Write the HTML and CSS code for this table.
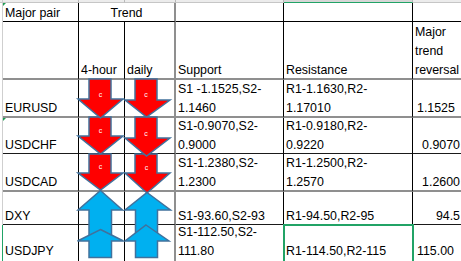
FILE: index.html
```html
<!DOCTYPE html>
<html>
<head>
<meta charset="utf-8">
<link rel="stylesheet" href="styles.css">
</head>
<body>
<div class="sheet">
  <div class="grid">
    <div class="row strip">
      <div class="c rh"></div><div class="c"></div><div class="c"></div><div class="c"></div><div class="c"></div><div class="c hsel"></div><div class="c"></div>
    </div>
    <div class="row r1">
      <div class="c rh"></div>
      <div class="c flag"><span>Major pair</span></div>
      <div class="c trend cc"><span>Trend</span></div>
      <div class="c"></div>
      <div class="c"></div>
      <div class="c"></div>
    </div>
    <div class="row r2">
      <div class="c rh"></div>
      <div class="c"></div>
      <div class="c"><span>4-hour</span></div>
      <div class="c cc"><span>daily</span></div>
      <div class="c"><span>Support</span></div>
      <div class="c"><span>Resistance</span></div>
      <div class="c"><span>Major</span><span>trend</span><span>reversal</span></div>
    </div>
    <div class="row r3">
      <div class="c rh"></div>
      <div class="c"><span>EURUSD</span></div>
      <div class="c"></div>
      <div class="c cc"></div>
      <div class="c"><span>S1 -1.1525,S2-</span><span>1.1460</span></div>
      <div class="c"><span>R1-1.1630,R2-</span><span>1.17010</span></div>
      <div class="c lpad"><span>1.1525</span></div>
    </div>
    <div class="row r4">
      <div class="c rh"></div>
      <div class="c flag"><span>USDCHF</span></div>
      <div class="c"></div>
      <div class="c cc"></div>
      <div class="c"><span>S1-0.9070,S2-</span><span>0.9000</span></div>
      <div class="c"><span>R1-0.9180,R2-</span><span>0.9220</span></div>
      <div class="c num"><span>0.9070</span></div>
    </div>
    <div class="row r5">
      <div class="c rh"></div>
      <div class="c"><span>USDCAD</span></div>
      <div class="c"></div>
      <div class="c cc"></div>
      <div class="c"><span>S1-1.2380,S2-</span><span>1.2300</span></div>
      <div class="c"><span>R1-1.2500,R2-</span><span>1.2570</span></div>
      <div class="c num"><span>1.2600</span></div>
    </div>
    <div class="row r6">
      <div class="c rh"></div>
      <div class="c"><span>DXY</span></div>
      <div class="c"></div>
      <div class="c cc"></div>
      <div class="c"><span>S1-93.60,S2-93</span></div>
      <div class="c"><span>R1-94.50,R2-95</span></div>
      <div class="c num"><span>94.5</span></div>
    </div>
    <div class="row r7">
      <div class="c rh rsel"></div>
      <div class="c"><span>USDJPY</span></div>
      <div class="c"></div>
      <div class="c cc"></div>
      <div class="c"><span>S1-112.50,S2-</span><span>111.80</span></div>
      <div class="c sel"><span>R1-114.50,R2-115</span></div>
      <div class="c lpad"><span>115.00</span></div>
    </div>
  </div>

  <svg class="shapes" width="461" height="261" viewBox="0 0 461 261">
    <g class="down">
      <path d="M89 154 H111 V173 H123 L100.5 190 L78 173 H89 Z"/>
      <path d="M89 117 H111 V136 H123 L100.5 154 L78 136 H89 Z"/>
      <path d="M89 79 H111 V99 H123 L100.5 118 L78 99 H89 Z"/>
      <path d="M135 154 H157 V173 H170 L147 193 L125 173 H135 Z"/>
      <path d="M135 117 H157 V138 H170 L146.5 156 L125 138 H135 Z"/>
      <path d="M135 79 H157 V100 H170 L146.5 117 L125 100 H135 Z"/>
    </g>
    <g class="up">
      <path d="M100.5 190.5 L122.5 210 H111.5 V240 H89 V210 H78 Z"/>
      <path d="M147 192.5 L170.5 210 H157.5 V240 H135.5 V210 H125 Z"/>
      <path d="M100.5 229.5 L123.5 241 H111.5 V257.5 H89 V241 H77.5 Z"/>
      <path d="M146 225 L169 241 H157.5 V257.5 H135.5 V241 H125 Z"/>
    </g>
    <g class="lbl">
      <text x="100.5" y="97">c</text>
      <text x="146" y="97">c</text>
      <text x="100.5" y="133">c</text>
      <text x="146" y="136">c</text>
      <text x="100.5" y="169">c</text>
      <text x="146.5" y="170">c</text>
    </g>
  </svg>
</div>
</body>
</html>
```

FILE: styles.css
```css
html, body {
  margin: 0;
  padding: 0;
  overflow: hidden;
  background: #ffffff;
}

body {
  font-family: "Liberation Sans", Arial, sans-serif;
  font-size: 12.4px;
  color: #000000;
}

.sheet {
  position: relative;
  width: 461px;
  height: 261px;
  overflow: hidden;
}

.grid {
  display: grid;
  grid-template-columns: 3px 76px 46px 51px 108px 129px 50px;
  grid-template-rows: 3px 19px 58px 38px 36px 38px 33px 37px;
  width: max-content;
}

.row {
  display: contents;
}

.c {
  box-sizing: border-box;
  border-right: 1px solid #000000;
  border-bottom: 1px solid #000000;
  padding: 0 2px;
  display: flex;
  flex-direction: column;
  justify-content: flex-end;
  align-items: flex-start;
  line-height: 18.7px;
  white-space: nowrap;
  overflow: hidden;
  position: relative;
}

.c > span:last-child {
  margin-bottom: -1.5px;
}

.c.cc {
  border-right: 2px solid #8f8f8f;
}

.trend {
  grid-column: span 2;
  align-items: center;
}

.num {
  align-items: flex-end;
}

.lpad {
  padding-left: 4px;
}

/* column header strip */
.strip > .c {
  padding: 0;
  background: #ececec;
  border-right: 1px solid #b9b9b9;
  border-bottom: 1px solid #c6c6c6;
}

.strip > .c.hsel {
  background: #d6d6d6;
  border-bottom-color: #21a366;
}

/* row borders */
.r1 > .c { border-bottom: 1px solid #000000; }
.r2 > .c { border-bottom: 2px solid #8f8f8f; }
.r3 > .c { border-bottom: 2px solid #8f8f8f; }
.r4 > .c { border-bottom: 1px solid #1a1a1a; }
.r5 > .c { border-bottom: 2px solid #8f8f8f; }
.r6 > .c { border-bottom: 1px solid #1a1a1a; }
.r7 > .c { border-bottom: 0; padding-bottom: 3px; }

/* row header sliver */
.row > .c.rh {
  padding: 0;
  border-bottom: 0;
  border-right: 1px solid #cfcfcf;
  background: #ffffff;
}

.strip > .c.rh {
  background: #ececec;
  border-bottom: 1px solid #c6c6c6;
}

.row > .c.rh.rsel {
  border-right-color: #21a366;
}

/* selected cell */
.c.sel {
  outline: 2px solid #21a366;
  outline-offset: -1px;
  z-index: 1;
  overflow: visible;
}

/* green error indicator */
.flag::before {
  content: "";
  position: absolute;
  left: 0;
  top: 0;
  border-top: 3px solid #1f9d55;
  border-right: 3px solid transparent;
}

/* floating arrow shapes */
.shapes {
  position: absolute;
  left: 0;
  top: 0;
  z-index: 2;
  pointer-events: none;
}

.shapes path {
  stroke: #41719c;
  stroke-width: 1.5;
  stroke-linejoin: miter;
}

.down path {
  fill: #ff0000;
}

.up path {
  fill: #00b0f0;
}

.lbl text {
  fill: #ffffff;
  font-family: "Liberation Sans", Arial, sans-serif;
  font-size: 7px;
  text-anchor: middle;
}
```
